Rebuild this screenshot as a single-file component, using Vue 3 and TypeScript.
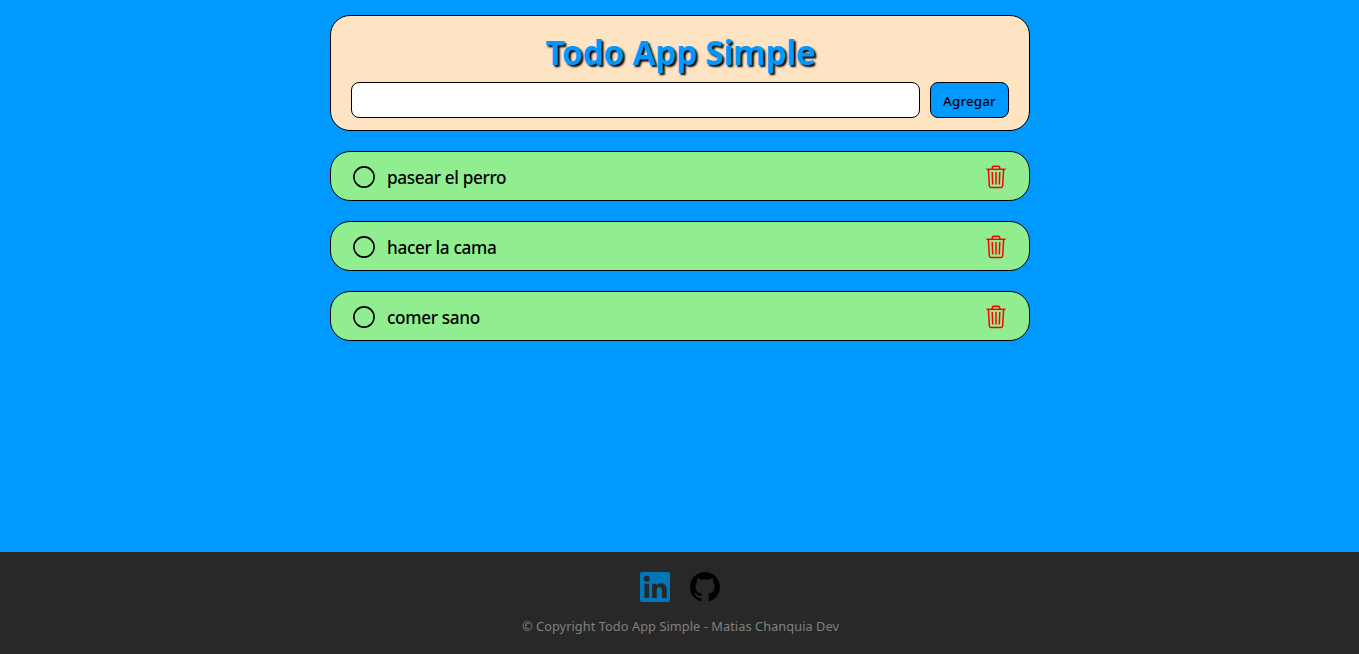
<script setup lang="ts">
import { ref } from 'vue'

interface Task {
  id: number
  text: string
}

const draft = ref('')
const tasks = ref<Task[]>([
  { id: 1, text: 'pasear el perro' },
  { id: 2, text: 'hacer la cama' },
  { id: 3, text: 'comer sano' },
])

function addTask() {
  const text = draft.value.trim()
  if (!text) return
  tasks.value.push({ id: Date.now(), text })
  draft.value = ''
}

function removeTask(id: number) {
  tasks.value = tasks.value.filter((t) => t.id !== id)
}
</script>

<template>
  <div class="page">
    <main class="content">
      <form class="panel" @submit.prevent="addTask">
        <h1 class="title">Todo App Simple</h1>
        <div class="row">
          <input v-model="draft" class="field" type="text" />
          <button class="add" type="submit">Agregar</button>
        </div>
      </form>
      <ul class="list">
        <li v-for="task in tasks" :key="task.id" class="task">
          <svg class="circle" viewBox="0 0 24 24"><circle cx="12" cy="12" r="10.1" /></svg>
          <span class="text">{{ task.text }}</span>
          <svg class="trash" viewBox="0 0 24 24" @click="removeTask(task.id)">
            <path d="M2.4 4.3H21.6" />
            <path d="M4.4 4.3 5.3 20.8Q5.4 22.4 7 22.4H17Q18.6 22.4 18.7 20.8L19.6 4.3" />
            <path d="M8.3 4.3V2.6Q8.3 1.3 9.6 1.3H14.4Q15.7 1.3 15.7 2.6V4.3" />
            <path d="M12 7V19.5M8.2 7 8.7 19.5M15.8 7 15.3 19.5" />
          </svg>
        </li>
      </ul>
    </main>
    <footer class="footer">
      <div class="links">
        <svg class="linkedin" viewBox="0 0 30 30">
          <path fill-rule="evenodd" d="M2.2 0H27.8Q30 0 30 2.2V27.8Q30 30 27.8 30H2.2Q0 30 0 27.8V2.2Q0 0 2.2 0ZM4.5 11.7V26H9.1V11.7ZM6.8 3.7A3 3 0 1 0 6.8 9.7 3 3 0 1 0 6.8 3.7ZM12.1 11.7V26H16.7V18.7C16.7 16.5 17.5 15 19.5 15 21.4 15 22 16.5 22 18.8V26H26.7V17.8C26.7 13.6 24.6 11.2 21.1 11.2 18.8 11.2 17.3 12.3 16.6 13.6V11.7Z" />
        </svg>
        <svg class="github" viewBox="0 0 16 16">
          <path d="M8 0C3.58 0 0 3.58 0 8c0 3.54 2.29 6.53 5.47 7.59.4.07.55-.17.55-.38 0-.19-.01-.82-.01-1.49-2.01.37-2.53-.49-2.69-.94-.09-.23-.48-.94-.82-1.13-.28-.15-.68-.52-.01-.53.63-.01 1.08.58 1.23.82.72 1.21 1.87.87 2.33.66.07-.52.28-.87.51-1.07-1.78-.2-3.64-.89-3.64-3.95 0-.87.31-1.59.82-2.15-.08-.2-.36-1.02.08-2.12 0 0 .67-.21 2.2.82.64-.18 1.32-.27 2-.27s1.36.09 2 .27c1.53-1.04 2.2-.82 2.2-.82.44 1.1.16 1.92.08 2.12.51.56.82 1.27.82 2.15 0 3.07-1.87 3.75-3.65 3.95.29.25.54.73.54 1.48 0 1.07-.01 1.93-.01 2.2 0 .21.15.46.55.38A8.01 8.01 0 0 0 16 8c0-4.42-3.58-8-8-8z" />
        </svg>
      </div>
      <p class="copy">© Copyright Todo App Simple - Matias Chanquia Dev</p>
    </footer>
  </div>
</template>

<style>
body {
  margin: 0;
}
</style>

<style scoped>
.page {
  box-sizing: border-box;
  height: 100vh;
  overflow: hidden;
  display: flex;
  flex-direction: column;
  background: #0099ff;
  font-family: "Segoe UI", "Noto Sans", "Open Sans", sans-serif;
}
.content {
  flex: 1;
  width: 700px;
  margin: 0 auto;
  padding-top: 15px;
}
.panel {
  box-sizing: border-box;
  height: 116px;
  padding: 12px 20px;
  border: 1px solid #000;
  border-radius: 20px;
  background: #ffe4c4;
}
.title {
  margin: 0 0 6px;
  padding-left: 2px;
  height: 48px;
  line-height: 48px;
  text-align: center;
  white-space: nowrap;
  font-size: 33.5px;
  font-weight: 700;
  letter-spacing: -0.35px;
  color: #0099ff;
  text-shadow: 2px 2px 2px #000;
}
.row {
  display: flex;
  gap: 10px;
}
.field {
  box-sizing: border-box;
  flex: 1;
  min-width: 0;
  height: 36px;
  padding: 0 10px;
  border: 1px solid #000;
  border-radius: 8px;
  background: #fff;
  outline: none;
}
.add {
  box-sizing: border-box;
  width: 79px;
  height: 36px;
  padding: 2px 0 0 1px;
  border: 1px solid #000;
  border-radius: 8px;
  background: #0099ff;
  color: #000;
  font: 500 13.33px "Segoe UI", "Noto Sans", sans-serif;
  letter-spacing: 0.2px;
}
.list {
  list-style: none;
  margin: 20px 0 0;
  padding: 0;
  display: flex;
  flex-direction: column;
  gap: 20px;
}
.task {
  box-sizing: border-box;
  height: 50px;
  padding: 2px 21px 0;
  display: flex;
  align-items: center;
  border: 1px solid #000;
  border-radius: 20px;
  background: #90ee90;
}
.circle {
  width: 24px;
  height: 24px;
  fill: none;
  stroke: #000;
  stroke-width: 1.6;
}
.text {
  flex: 1;
  margin-left: 11.5px;
  padding-top: 2px;
  font-size: 17.2px;
  font-weight: 500;
  line-height: 24px;
  letter-spacing: -0.35px;
}
.trash {
  width: 24px;
  height: 24px;
  fill: none;
  stroke: #f00;
  stroke-width: 1.5;
  cursor: pointer;
}
.footer {
  box-sizing: border-box;
  height: 102px;
  padding-top: 20px;
  background: #282828;
}
.links {
  display: flex;
  justify-content: center;
  gap: 20px;
}
.links svg {
  width: 30px;
  height: 30px;
}
.linkedin {
  fill: #0077b7;
}
.github {
  fill: #000;
}
.copy {
  margin: 14px 0 0;
  padding-left: 2px;
  text-align: center;
  font-size: 12.8px;
  letter-spacing: 0.05px;
  line-height: 20px;
  color: #808080;
}
</style>
